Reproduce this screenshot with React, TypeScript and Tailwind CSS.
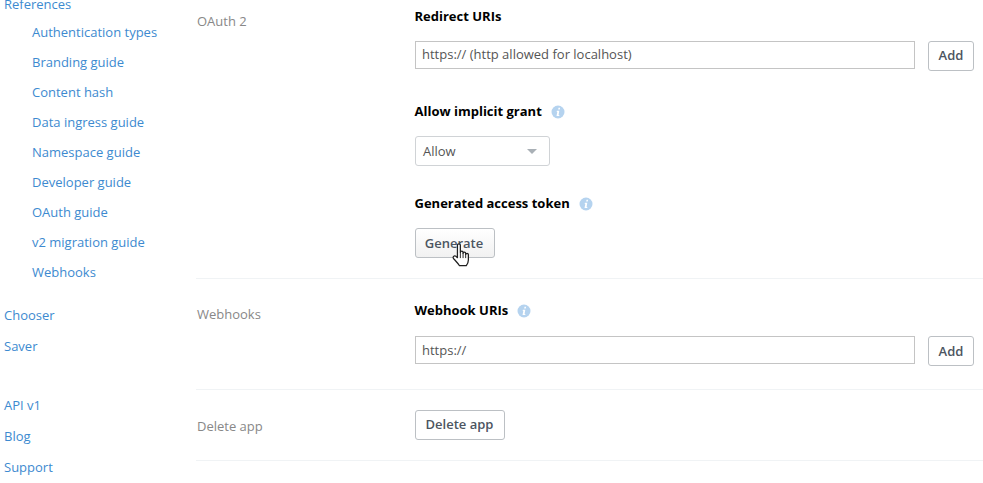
const subLinks = [
  "Authentication types",
  "Branding guide",
  "Content hash",
  "Data ingress guide",
  "Namespace guide",
  "Developer guide",
  "OAuth guide",
  "v2 migration guide",
  "Webhooks",
];

function Info() {
  return (
    <svg width="14" height="14" viewBox="0 0 14 14" className="shrink-0">
      <circle cx="7" cy="7" r="6.5" fill="#b5d3ef" />
      <path d="M7.5 2.8h1.6l-.3 1.7H7.2zM5.9 5.8h2.4L7.6 10h.8l-.2 1.1H5.5L6.3 6.9h-.6z" fill="#fff" />
    </svg>
  );
}

function Hand() {
  return (
    <svg width="21" height="25" viewBox="0 0 19 24" className="absolute left-[36px] top-[15px]">
      <path
        d="M5.6 2.2c0-1.9 2.8-1.9 2.8 0v6.9c0-1.6 2.6-1.6 2.6 0v.9c0-1.5 2.5-1.5 2.5 0v1c0-1.4 2.6-1.4 2.6 0v5.2c0 2.4-.9 3.9-2 5.6H7.6c-1.3-2.2-3.4-4.2-5.6-6.7-1.4-1.7.5-3.6 2.2-2.3l1.4 1.3z"
        fill="#fff"
        stroke="#1f1f1f"
        strokeWidth="1.2"
        strokeLinejoin="round"
      />
      <path d="M8.4 9.5v5M11 10v4.5M13.5 11v3.5" stroke="#1f1f1f" strokeWidth="0.9" fill="none" />
    </svg>
  );
}

function Btn({ children, className = "" }: { children: React.ReactNode; className?: string }) {
  return (
    <button className={`h-[30px] rounded-[3px] border border-[#bcc0c4] bg-white text-[13px] font-semibold text-[#4c5561] ${className}`}>
      {children}
    </button>
  );
}

function FieldRow({ placeholder, low = false }: { placeholder: string; low?: boolean }) {
  return (
    <div className="flex items-start">
      <div className={`w-[500px] h-[28px] border border-[#c4c4c4] bg-white pl-[6px] flex items-center text-[13px] text-[#555] ${low ? "pt-[2px]" : ""}`}>
        {placeholder}
      </div>
      <Btn className={`ml-[13px] w-[46px] ${low ? "pt-[2px]" : ""}`}>Add</Btn>
    </div>
  );
}

function FieldLabel({ children, info = false }: { children: React.ReactNode; info?: boolean }) {
  return (
    <div className="flex items-center gap-[9px] h-[18px] -ml-[0.5px] text-[13px] font-bold text-black">
      <span>{children}</span>
      {info && <Info />}
    </div>
  );
}

export default function App() {
  return (
    <div className="w-[983px] h-[483px] overflow-hidden bg-white flex font-['Open_Sans',sans-serif]">
      <nav className="w-[196px] shrink-0 text-[13px] text-[#3d8ad0] pl-[4px] -mt-[7px]">
        <div className="h-[22px] leading-[22px]">References</div>
        <div className="pl-[28px] mt-[2px] flex flex-col">
          {subLinks.map((l) => (
            <div key={l} className="h-[30px] leading-[30px]">{l}</div>
          ))}
        </div>
        <div className="mt-[13px] flex flex-col">
          <div className="h-[31px] leading-[31px]">Chooser</div>
          <div className="h-[31px] leading-[31px]">Saver</div>
        </div>
        <div className="mt-[28px] flex flex-col">
          <div className="h-[31px] leading-[31px]">API v1</div>
          <div className="h-[31px] leading-[31px]">Blog</div>
          <div className="h-[31px] leading-[31px]">Support</div>
        </div>
      </nav>

      <main className="flex-1 min-w-0 text-[13px]">
        <section className="h-[279px] border-b border-[#f0f3f5] flex">
          <div className="w-[219px] shrink-0 text-[#888] pt-[12px] pl-px leading-[18px]">OAuth 2</div>
          <div className="pt-[8px]">
            <FieldLabel>Redirect URIs</FieldLabel>
            <div className="mt-[15px]">
              <FieldRow placeholder="https:// (http allowed for localhost)" />
            </div>
            <div className="mt-[32px]">
              <FieldLabel info>Allow implicit grant</FieldLabel>
            </div>
            <div className="mt-[15px] w-[135px] h-[30px] rounded-[3px] border border-[#d0d3d6] flex items-center justify-between pl-[7px] pr-[12px] pt-[2px] text-[#555]">
              <span>Allow</span>
              <span className="w-0 h-0 -mt-[2px] border-x-[5px] border-x-transparent border-t-[5px] border-t-[#a9b0b6]" />
            </div>
            <div className="mt-[29px]">
              <FieldLabel info>Generated access token</FieldLabel>
            </div>
            <div className="mt-[15px] relative w-[80px]">
              <Btn className="w-[80px] pr-[2px] pt-[2px] bg-gradient-to-b from-white to-[#f1f1f1]">Generate</Btn>
              <Hand />
            </div>
          </div>
        </section>

        <section className="h-[111px] border-b border-[#f0f3f5] flex">
          <div className="w-[219px] shrink-0 text-[#888] pt-[26px] pl-px leading-[18px]">Webhooks</div>
          <div className="pt-[23px]">
            <FieldLabel info>Webhook URIs</FieldLabel>
            <div className="mt-[16px]">
              <FieldRow placeholder="https://" low />
            </div>
          </div>
        </section>

        <section className="h-[71px] border-b border-[#f0f3f5] flex">
          <div className="w-[219px] shrink-0 text-[#888] pt-[27px] pl-px leading-[18px]">Delete app</div>
          <div className="pt-[20px]">
            <Btn className="w-[90px] pr-[1px]">Delete app</Btn>
          </div>
        </section>
      </main>
    </div>
  );
}
